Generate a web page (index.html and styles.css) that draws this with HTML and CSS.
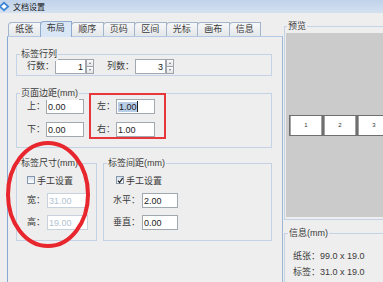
FILE: index.html
```html
<!DOCTYPE html>
<html lang="zh-CN">
<head>
    <meta charset="UTF-8">
    <title>文档设置</title>
    <link rel="stylesheet" href="styles.css">
</head>
<body>

    <div class="titlebar">
        <span class="app-icon">
            <svg width="10" height="11" viewBox="0 0 10 11">
                <path d="M4 0.5 L9.5 5.5 L4 10.5 L-1.5 5.5 Z" fill="#3f86d6"/>
                <path d="M4 3 L6.8 5.5 L4 8 L1.2 5.5 Z" fill="#ffffff"/>
            </svg>
        </span>
        <span class="title">文档设置</span>
    </div>

    <div class="dialog">
        <div class="settings">
            <div class="tabs">
                <div class="tab">纸张</div>
                <div class="tab active">布局</div>
                <div class="tab">顺序</div>
                <div class="tab">页码</div>
                <div class="tab">区间</div>
                <div class="tab">光标</div>
                <div class="tab">画布</div>
                <div class="tab">信息</div>
            </div>

            <div class="pane">
                <!-- 标签行列 -->
                <div class="group group-rows">
                    <span class="group-title">标签行列</span>
                    <div class="row">
                        <span class="lbl lbl-2">行数：</span>
                        <div class="spinner">
                            <span class="field num">1</span>
                            <span class="spin"><i class="up"></i><i class="down"></i></span>
                        </div>
                        <span class="lbl lbl-2 col2">列数：</span>
                        <div class="spinner">
                            <span class="field num">3</span>
                            <span class="spin"><i class="up"></i><i class="down"></i></span>
                        </div>
                    </div>
                </div>

                <!-- 页面边距 -->
                <div class="group group-margins">
                    <span class="group-title">页面边距(mm)</span>
                    <div class="row">
                        <span class="lbl lbl-1">上：</span>
                        <span class="field w38">0.00</span>
                        <span class="lbl lbl-1 col2">左：</span>
                        <span class="field w39"><span class="sel">1.00</span><span class="caret"></span></span>
                    </div>
                    <div class="row">
                        <span class="lbl lbl-1">下：</span>
                        <span class="field w38">0.00</span>
                        <span class="lbl lbl-1 col2">右：</span>
                        <span class="field w39">1.00</span>
                    </div>
                </div>

                <div class="pair">
                    <!-- 标签尺寸 -->
                    <div class="group group-size">
                        <span class="group-title">标签尺寸(mm)</span>
                        <div class="check-row">
                            <span class="check"></span>
                            <span>手工设置</span>
                        </div>
                        <div class="row">
                            <span class="lbl lbl-s">宽：</span>
                            <span class="field w41 disabled">31.00</span>
                        </div>
                        <div class="row">
                            <span class="lbl lbl-s">高：</span>
                            <span class="field w41 disabled">19.00</span>
                        </div>
                    </div>

                    <!-- 标签间距 -->
                    <div class="group group-gap">
                        <span class="group-title">标签间距(mm)</span>
                        <div class="check-row indent">
                            <span class="check checked">
                                <svg width="7" height="7" viewBox="0 0 7 7">
                                    <path d="M1 3.6 L2.8 5.6 L6.2 0.8" fill="none" stroke="#1f1f1f" stroke-width="1.3"/>
                                </svg>
                            </span>
                            <span>手工设置</span>
                        </div>
                        <div class="row">
                            <span class="lbl lbl-3">水平：</span>
                            <span class="field w36">2.00</span>
                        </div>
                        <div class="row">
                            <span class="lbl lbl-3">垂直：</span>
                            <span class="field w36">0.00</span>
                        </div>
                    </div>
                </div>
            </div>
        </div>

        <div class="side">
            <div class="group preview-group">
                <span class="group-title">预览</span>
                <div class="preview">
                    <span class="cell">1</span>
                    <span class="cell">2</span>
                    <span class="cell">3</span>
                </div>
            </div>
            <div class="group info-group">
                <span class="group-title">信息(mm)</span>
                <p>纸张：99.0 x 19.0</p>
                <p>标签：31.0 x 19.0</p>
            </div>
        </div>
    </div>

    <!-- 标注 -->
    <div class="mark-rect"></div>
    <svg class="mark-ellipse" width="100" height="115" viewBox="0 0 100 115">
        <ellipse cx="48" cy="56.5" rx="40" ry="51.5" fill="none" stroke="#e8262d" stroke-width="4"/>
    </svg>

</body>
</html>
```

FILE: styles.css
```css
* {
    box-sizing: border-box;
}

body {
    margin: 0;
    width: 383px;
    height: 282px;
    overflow: hidden;
    position: relative;
    background-color: #eeeeee;
    color: #3a3a3a;
    font-family: "Liberation Sans", "Noto Sans CJK SC", sans-serif;
    font-size: 9px;
}

.titlebar {
    height: 13px;
    display: flex;
    align-items: center;
    background: linear-gradient(#c1d3ea, #d4e1f1);
}

.app-icon {
    display: flex;
    width: 10px;
}

.title {
    margin-left: 3px;
    font-size: 8px;
    color: #151515;
}

.dialog {
    display: flex;
    align-items: flex-start;
    height: 269px;
    overflow: hidden;
}

.settings {
    width: 283px;
    padding-top: 8px;
}

/* 选项卡 */
.tabs {
    display: flex;
    align-items: flex-end;
    height: 15px;
    padding-left: 8px;
}

.tab {
    width: 32.5px;
    height: 14px;
    margin-left: -1px;
    border: 1px solid #a3b5cb;
    border-bottom: 0;
    border-top-left-radius: 4px;
    background: linear-gradient(#f6f7f8, #e4e7ea);
    text-align: center;
    line-height: 12px;
}

.tab:first-child {
    margin-left: 0;
}

.tab.active {
    position: relative;
    z-index: 1;
    height: 16px;
    margin-bottom: -1px;
    background: #d8e6f6;
    border-color: #8eaacc;
}

.pane {
    margin-left: 7px;
    width: 276px;
    height: 246px;
    border-top: 1px solid #b3c8e2;
    border-left: 1px solid #86a8d3;
    border-right: 1px solid #9db6d6;
    padding: 17px 0 0 8px;
}

/* 分组框 */
.group {
    position: relative;
    border: 1px solid #c3d2e4;
}

.group-title {
    position: absolute;
    top: -7px;
    left: 3px;
    padding: 0 1px;
    background-color: #eeeeee;
    line-height: 13px;
    white-space: nowrap;
}

.row {
    display: flex;
    align-items: center;
    height: 15px;
}

.lbl {
    line-height: 15px;
    white-space: nowrap;
    overflow: hidden;
}

.lbl-1 { width: 19px; }
.lbl-2 { width: 28px; }
.lbl-s { width: 20px; }
.lbl-3 { width: 29px; }

.col2 {
    margin-left: 13px;
}

.field {
    display: flex;
    align-items: center;
    height: 15px;
    padding-left: 1px;
    border: 1px solid #a2a8b0;
    background-color: #ffffff;
    color: #222222;
    white-space: nowrap;
}

.w36 { width: 36px; }
.w38 { width: 38px; }
.w39 { width: 39px; }
.w41 { width: 41px; }

.field.disabled {
    border-color: #c8d2de;
    color: #b3c1d3;
}

.sel {
    background-color: #b7cde8;
    padding-left: 1px;
}

.caret {
    width: 1px;
    height: 11px;
    background-color: #222222;
}

.spinner {
    display: flex;
}

.field.num {
    width: 31px;
    justify-content: flex-end;
    padding-right: 2px;
}

.spin {
    display: flex;
    flex-direction: column;
    width: 8px;
    height: 15px;
}

.spin i {
    display: flex;
    justify-content: center;
    align-items: center;
    height: 8px;
    border: 1px solid #a0a4aa;
    background: linear-gradient(#fdfdfd, #e2e4e7);
}

.spin i + i {
    margin-top: -1px;
}

.spin .up::after {
    content: "";
    border-left: 1.5px solid transparent;
    border-right: 1.5px solid transparent;
    border-bottom: 2px solid #777777;
}

.spin .down::after {
    content: "";
    border-left: 1.5px solid transparent;
    border-right: 1.5px solid transparent;
    border-top: 2px solid #777777;
}

.group-rows {
    width: 256px;
    height: 22px;
    padding: 4px 0 0 10px;
}

.group-margins {
    width: 256px;
    height: 55px;
    margin-top: 17px;
    padding: 5px 0 0 10px;
}

.group-margins .row + .row {
    margin-top: 8px;
}

.pair {
    display: flex;
    gap: 6px;
    margin-top: 15px;
}

.group-size,
.group-gap {
    height: 78px;
    padding: 10px 0 0 10px;
}

.group-size {
    width: 81px;
}

.group-gap {
    width: 169px;
    padding-left: 9px;
}

.check-row {
    display: flex;
    align-items: center;
    height: 12px;
    margin-bottom: 7px;
}

.check-row.indent {
    margin-left: 3px;
}

.check {
    display: flex;
    width: 8px;
    height: 8px;
    margin-right: 2px;
    border: 1px solid #8597ad;
    background: linear-gradient(#d6dfea, #ffffff);
}

.check.checked svg {
    margin: -0.5px 0 0 -0.5px;
}

.group-size .row + .row,
.group-gap .row + .row {
    margin-top: 7px;
}

/* 预览 */
.side {
    margin: 13px 0 0 1px;
    width: 105px;
}

.preview-group {
    height: 194px;
    padding: 6px 0 0 1px;
}

.preview-group .group-title {
    left: 2px;
}

.preview {
    display: flex;
    align-items: center;
    height: 184px;
    padding-left: 3px;
    background-color: #cbcbcb;
}

.cell {
    display: flex;
    justify-content: center;
    align-items: center;
    flex-shrink: 0;
    width: 34px;
    height: 21px;
    border: 1px solid #6f6f6f;
    box-shadow: inset 1px 0 #a3a3a3, inset -1px 0 #a3a3a3;
    background-color: #ffffff;
    font-size: 6px;
    color: #333333;
}

.info-group {
    height: 60px;
    margin-top: 13px;
    padding: 14px 0 0 8px;
}

.info-group p {
    margin: 0;
    line-height: 16px;
    white-space: nowrap;
}

/* 标注 */
.mark-rect {
    position: absolute;
    left: 89px;
    top: 93px;
    width: 77px;
    height: 46px;
    border: 2px solid #e8363d;
}

.mark-ellipse {
    position: absolute;
    left: 0;
    top: 138px;
}
```
